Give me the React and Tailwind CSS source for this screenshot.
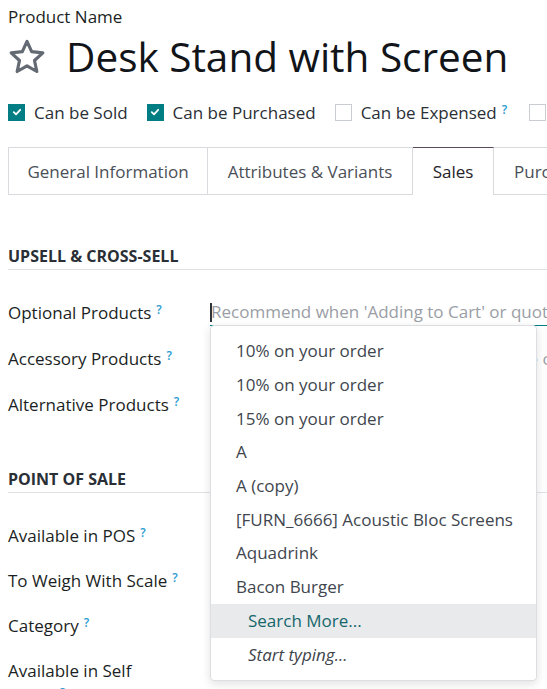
import React from "react";

const Help = () => (
  <sup className="ml-[5px] text-[12px] font-semibold text-[#2b9bd1] relative -top-[5px]">?</sup>
);

function Check({ checked }) {
  return checked ? (
    <span className="w-[17px] h-[17px] bg-[#017e84] flex items-center justify-center shrink-0">
      <svg width="10" height="10" viewBox="0 0 10 10">
        <path d="M1.8 5.2 L4 7.3 L8.2 2.8" stroke="white" strokeWidth="1.8" fill="none" strokeLinecap="round" strokeLinejoin="round" />
      </svg>
    </span>
  ) : (
    <span className="w-[17px] h-[17px] border border-[#c9ccd0] bg-white shrink-0"></span>
  );
}

function Field({ label, children }) {
  return (
    <div className="flex items-center h-[46px]">
      <div className="w-[202px] shrink-0 text-[#1b1f24] font-medium">
        {label}
        <Help />
      </div>
      <div className="flex-1 relative whitespace-nowrap">{children}</div>
    </div>
  );
}

const items = [
  "10% on your order",
  "10% on your order",
  "15% on your order",
  "A",
  "A (copy)",
  "[FURN_6666] Acoustic Bloc Screens",
  "Aquadrink",
  "Bacon Burger",
];

export default function App() {
  return (
    <div className="w-[547px] h-[689px] overflow-hidden bg-white font-['Open_Sans',sans-serif] font-[450] text-[17px] leading-[23px]">
      <div className="w-[900px] pl-2">
        {/* Title */}
        <div className="pt-[5px] text-[#1b1f24] font-medium text-[17px] leading-[23px]">Product Name</div>
        <div className="flex items-center h-[44px] mt-[7px]">
          <svg width="40" height="40" viewBox="0 0 24 24" className="shrink-0 -ml-[1px]">
            <path
              d="M12 2.6l2.8 6.2 6.7.7-5 4.6 1.4 6.6L12 17.3l-5.9 3.4 1.4-6.6-5-4.6 6.7-.7z"
              fill="none"
              stroke="#646a73"
              strokeWidth="1.9"
              strokeLinejoin="round"
            />
          </svg>
          <h1 className="ml-[19px] text-[40.5px] font-normal text-[#111418] leading-none">Desk Stand with Screen</h1>
        </div>

        {/* Checkboxes */}
        <div className="flex items-center mt-[21px] h-[24px] text-[#2a2f36]">
          <label className="flex items-center gap-[9px] mr-[19px]">
            <Check checked />
            Can be Sold
          </label>
          <label className="flex items-center gap-[9px] mr-[19px]">
            <Check checked />
            Can be Purchased
          </label>
          <label className="flex items-center gap-[9px] mr-[22px]">
            <Check />
            <span>
              Can be Expensed
              <Help />
            </span>
          </label>
          <label className="flex items-center gap-[9px]">
            <Check />
            Is a Rental
          </label>
        </div>

        {/* Tabs */}
        <div className="flex mt-[23px] h-[48px]">
          <div className="w-[200px] border border-[#d8dadd] flex items-center justify-center text-[#4a4f57]">General Information</div>
          <div className="w-[205px] border-y border-r border-[#d8dadd] flex items-center justify-center text-[#4a4f57]">Attributes &amp; Variants</div>
          <div className="w-[81px] border-t border-t-[#5a4a56] border-r border-r-[#d8dadd] flex items-center justify-center text-[#1f2329]">Sales</div>
          <div className="w-[120px] border-y border-r border-[#d8dadd] flex items-center pl-[20px] text-[#4a4f57]">Purchase</div>
          <div className="flex-1 border-b border-[#d8dadd]"></div>
        </div>

        {/* Upsell */}
        <div className="mt-[50px] pb-[1px] border-b border-[#dfe1e4] font-bold text-[16px] text-[#2a2f36] uppercase">Upsell &amp; Cross-Sell</div>
        <div className="mt-[19px]">
          <Field label="Optional Products">
            <div className="relative h-[28px] flex items-center border-b border-[#017e84]">
              <span className="absolute left-0 top-[5px] w-[1.5px] h-[19px] bg-[#30343a]"></span>
              <span className="text-[#9a9ea5] pl-[1px]">Recommend when 'Adding to Cart' or quotation</span>
              {/* Dropdown */}
              <div className="absolute left-0 top-full w-[327px] bg-white border border-[#dcdee1] rounded-[4px] shadow-[0_3px_10px_rgba(0,0,0,0.12)] py-[8px] z-10">
                {items.map((t, i) => (
                  <div key={i} className="h-[33.7px] flex items-center pl-[25px] text-[#41464e]">{t}</div>
                ))}
                <div className="h-[34px] flex items-center pl-[37px] bg-[#e9eaeb] text-[#15676b]">Search More...</div>
                <div className="h-[34px] flex items-center pl-[37px] italic text-[#3e434a]">Start typing...</div>
              </div>
            </div>
          </Field>
          <Field label="Accessory Products">
            <span className="text-[#9a9ea5] pl-[1px]">Suggested accessories in the eCommerce cart</span>
          </Field>
          <Field label="Alternative Products">
            <span></span>
          </Field>
        </div>

        {/* POS */}
        <div className="mt-[41px] pb-[1px] border-b border-[#dfe1e4] font-bold text-[16px] text-[#2a2f36] uppercase">Point of Sale</div>
        <div className="mt-[20px]">
          <div className="h-[45px] flex items-center"><span className="text-[#1b1f24] font-medium">Available in POS<Help /></span></div>
          <div className="h-[45px] flex items-center"><span className="text-[#1b1f24] font-medium">To Weigh With Scale<Help /></span></div>
          <div className="h-[45px] flex items-center"><span className="text-[#1b1f24] font-medium">Category<Help /></span></div>
          <div className="h-[45px] flex items-start pt-[10px]"><span className="text-[#1b1f24] font-medium leading-[25px]">Available in Self<br />Order<Help /></span></div>
        </div>
      </div>
    </div>
  );
}
